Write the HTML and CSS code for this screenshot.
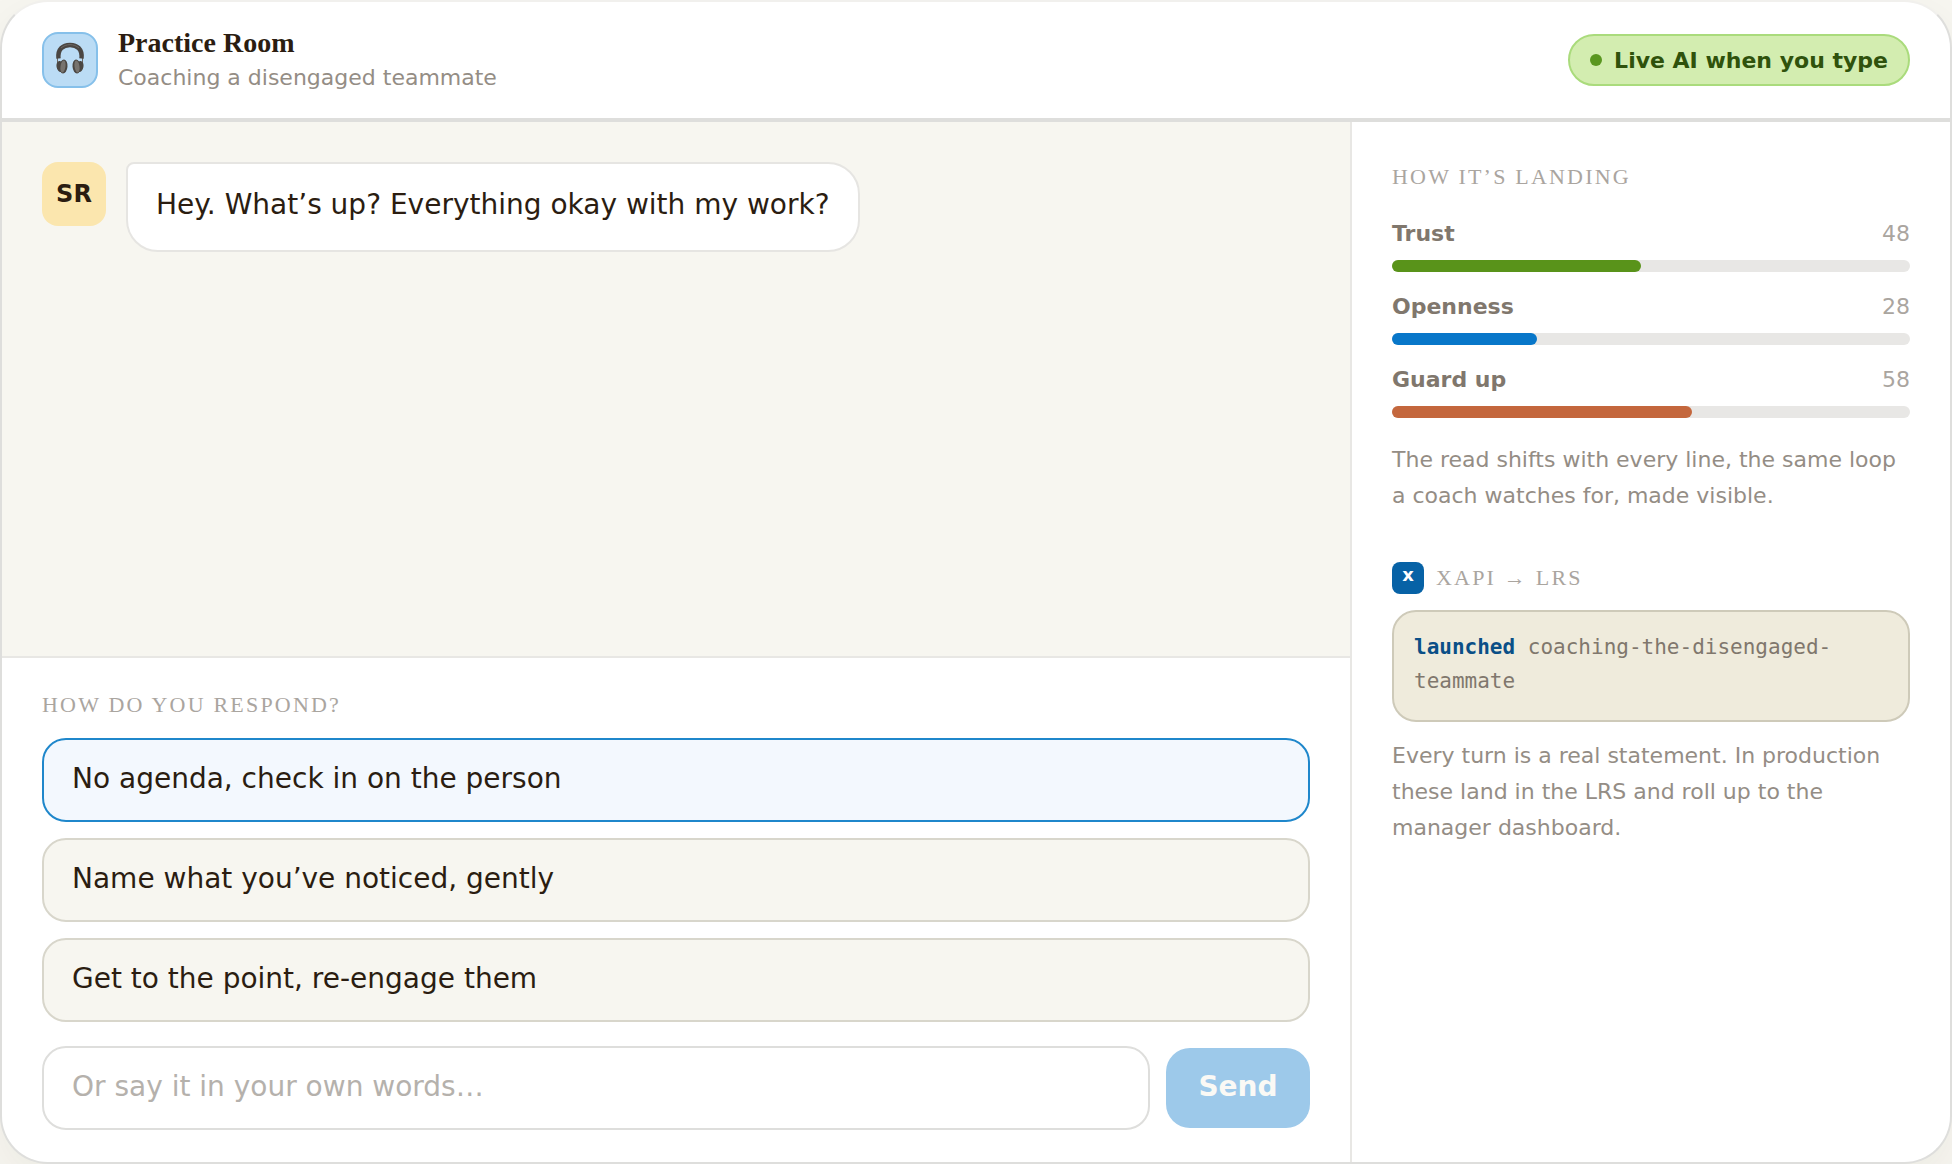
FILE: index.html
```html
<!DOCTYPE html>
<html lang="en">
<head>
<meta charset="utf-8">
<meta name="viewport" content="width=device-width, initial-scale=1">
<title>Practice Room</title>
<link rel="stylesheet" href="styles.css">
</head>
<body>
<div class="room">
  <header class="topbar">
    <span class="logo">
      <svg viewBox="0 0 48 48" width="48" height="48" aria-hidden="true">
        <path d="M11.500 23v8M36.500 23v8" fill="none" stroke="#6b6763" stroke-width="1"/>
        <path d="M12.500 24.500C11.500 15 17 11 24 11s12.500 4 11.500 13.500" fill="none" stroke="#4a4643" stroke-width="4.500"/>
        <path d="M15 14c5-4.500 13-4.500 18 0" fill="none" stroke="#6e6965" stroke-width="1"/>
        <ellipse cx="14" cy="32.500" rx="3.500" ry="5.500" fill="#4b4743" transform="rotate(-10 14 32.500)"/>
        <ellipse cx="34" cy="32.500" rx="3.500" ry="5.500" fill="#4b4743" transform="rotate(10 34 32.500)"/>
        <ellipse cx="17.500" cy="32.500" rx="4" ry="7" fill="#4b4743" transform="rotate(5 17.500 32.500)"/>
        <ellipse cx="30.500" cy="32.500" rx="4" ry="7" fill="#4b4743" transform="rotate(-5 30.500 32.500)"/>
        <ellipse cx="17" cy="32.500" rx="2.500" ry="6" fill="#77736e" transform="rotate(8 17 32.500)"/>
        <ellipse cx="31" cy="32.500" rx="2.500" ry="6" fill="#77736e" transform="rotate(-8 31 32.500)"/>
      </svg>
    </span>
    <div class="titles">
      <h1 class="title">Practice Room</h1>
      <p class="subtitle">Coaching a disengaged teammate</p>
    </div>
    <span class="live"><span class="dot"></span>Live AI when you type</span>
  </header>
  <div class="columns">
    <main class="conversation">
      <section class="chat" aria-label="Conversation">
        <div class="message">
          <span class="avatar">SR</span>
          <p class="bubble">Hey. What’s up? Everything okay with my work?</p>
        </div>
      </section>
      <section class="respond">
        <h2 class="eyebrow">How do you respond?</h2>
        <div class="choices">
          <button class="choice suggested" type="button">No agenda, check in on the person</button>
          <button class="choice" type="button">Name what you’ve noticed, gently</button>
          <button class="choice" type="button">Get to the point, re-engage them</button>
        </div>
        <form class="composer">
          <input class="reply" type="text" aria-label="Your reply" placeholder="Or say it in your own words…">
          <button class="send" type="submit" disabled>Send</button>
        </form>
      </section>
    </main>
    <aside class="sidebar">
      <section class="landing">
        <h2 class="eyebrow">How it’s landing</h2>
        <div class="meters">
          <div class="meter">
            <div class="meter-head"><strong class="meter-name">Trust</strong><span>48</span></div>
            <div class="track"><div class="fill trust" style="width:48%"></div></div>
          </div>
          <div class="meter">
            <div class="meter-head"><strong class="meter-name">Openness</strong><span>28</span></div>
            <div class="track"><div class="fill openness" style="width:28%"></div></div>
          </div>
          <div class="meter">
            <div class="meter-head"><strong class="meter-name">Guard up</strong><span>58</span></div>
            <div class="track"><div class="fill guard" style="width:58%"></div></div>
          </div>
        </div>
        <p class="note">The read shifts with every line, the same loop a coach watches for, made visible.</p>
      </section>
      <section class="statements">
        <div class="statements-head">
          <span class="badge">x</span>
          <h2 class="eyebrow">xAPI → LRS</h2>
        </div>
        <div class="log"><strong class="verb">launched</strong> coaching-the-disengaged-teammate</div>
        <p class="note">Every turn is a real statement. In production these land in the LRS and roll up to the manager dashboard.</p>
      </section>
    </aside>
  </div>
</div>
</body>
</html>
```
FILE: styles.css
```css
* {
  box-sizing: border-box;
}

body {
  margin: 0;
  background: #f7f6f0;
  color: #2b1d11;
  font-family: "DejaVu Sans", sans-serif;
  font-size: 22px;
}

h1,
h2,
p {
  margin: 0;
}

.room {
  display: flex;
  flex-direction: column;
  min-height: 100vh;
  overflow: hidden;
  border: 2px solid #dededc;
  border-top-color: #f1f0ed;
  border-radius: 48px;
  background: #fff;
  box-shadow: 0 16px 48px rgba(43, 29, 17, 0.06);
}

.topbar {
  display: flex;
  align-items: center;
  gap: 20px;
  height: 120px;
  padding: 0 40px;
  border-bottom: 4px solid #dededc;
}

.logo {
  display: flex;
  justify-content: center;
  width: 56px;
  height: 56px;
  border: 2px solid #86c0ea;
  border-radius: 16px;
  background: #bbdcf5;
}

.titles {
  flex: 1;
  padding-top: 2px;
}

.title {
  font: bold 28px/34px "Liberation Serif", serif;
}

.subtitle {
  color: #948d85;
  line-height: 36px;
}

.live {
  display: flex;
  align-items: center;
  gap: 12px;
  height: 52px;
  padding: 0 20px;
  border: 2px solid #aadb7c;
  border-radius: 26px;
  background: #d3edb0;
  color: #2f520c;
  font-weight: bold;
}

.dot {
  width: 12px;
  height: 12px;
  border-radius: 50%;
  background: #5a9720;
}

.columns {
  display: grid;
  grid-template-columns: 1fr 600px;
  flex: 1;
}

.conversation {
  display: flex;
  flex-direction: column;
}

.chat {
  flex: 1;
  padding: 40px;
  background: #f7f6f0;
}

.message {
  display: flex;
  align-items: flex-start;
  gap: 20px;
}

.avatar {
  width: 64px;
  border-radius: 16px;
  background: #fbe6ae;
  font-weight: bold;
  font-size: 24px;
  line-height: 64px;
  text-align: center;
}

.bubble {
  padding: 20px 28px 24px;
  border: 2px solid #e6e5e2;
  border-radius: 8px 32px 32px 32px;
  background: #fff;
  font-size: 28px;
  line-height: 42px;
}

.respond {
  padding: 32px 40px;
  border-top: 2px solid #e8e7e4;
}

.eyebrow {
  color: #aaa59f;
  font: 22px/30px "Liberation Serif", serif;
  letter-spacing: 0.1em;
  text-transform: uppercase;
}

.choices {
  display: flex;
  flex-direction: column;
  gap: 16px;
  margin: 18px 0 24px;
}

.choice,
.reply,
.send {
  padding: 21px 28px 23px;
  border: 2px solid #d8d6cb;
  border-radius: 24px;
  color: inherit;
  font: 28px/36px "DejaVu Sans", sans-serif;
}

.choice {
  background: #f7f6f0;
  text-align: left;
}

.suggested {
  border-color: #1f87cb;
  background: #f3f8fe;
}

.composer {
  display: flex;
  align-items: center;
  gap: 16px;
}

.reply {
  flex: 1;
  min-width: 0;
  border-color: #dededc;
  background: #fff;
}

.reply::placeholder {
  color: #b5b1ac;
  opacity: 1;
}

.send {
  width: 144px;
  padding: 21px 0 23px;
  border: 0;
  background: #9dc9ea;
  color: #faf9f5;
  font-weight: bold;
}

.sidebar {
  padding: 40px;
  border-left: 2px solid #e8e7e4;
}

.meters {
  display: flex;
  flex-direction: column;
  gap: 17px;
  margin: 24px 0;
}

.meter-head {
  display: flex;
  justify-content: space-between;
  margin-bottom: 8px;
  color: #aaa59f;
  line-height: 36px;
}

.meter-name {
  color: #80776d;
}

.track {
  height: 12px;
  border-radius: 6px;
  background: #e8e7e5;
}

.fill {
  height: 100%;
  border-radius: 6px;
}

.trust {
  background: #59931a;
}

.openness {
  background: #0877c9;
}

.guard {
  background: #c4673d;
}

.note {
  color: #948d85;
  line-height: 36px;
}

.statements {
  margin-top: 48px;
}

.statements-head {
  display: flex;
  align-items: center;
  gap: 12px;
}

.badge {
  width: 32px;
  height: 32px;
  border-radius: 8px;
  background: #0762a6;
  color: #fff;
  font-weight: bold;
  font-size: 18px;
  line-height: 26px;
  text-align: center;
}

.log {
  margin: 16px 0;
  padding: 18px 20px 22px;
  border: 2px solid #cecab9;
  border-radius: 24px;
  background: #efebdc;
  color: #80776d;
  font: 21px/34px "DejaVu Sans Mono", monospace;
}

.verb {
  color: #0a4f87;
}
```
